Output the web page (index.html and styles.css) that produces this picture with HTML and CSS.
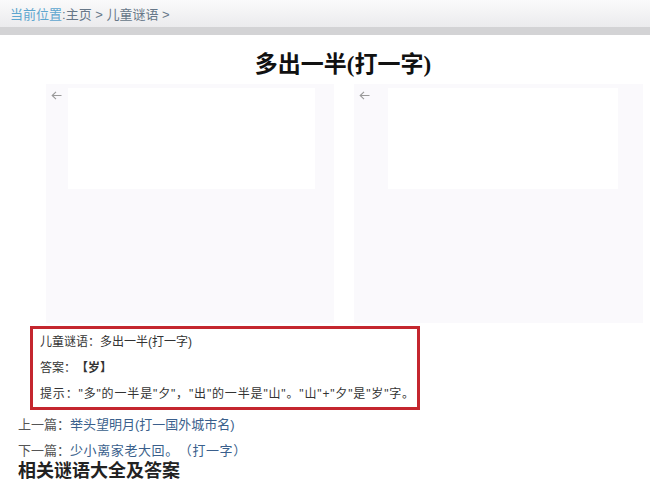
FILE: index.html
```html
<!DOCTYPE html>
<html lang="zh">
<head>
<meta charset="utf-8">
<title>多出一半(打一字)</title>
<link rel="stylesheet" href="styles.css">
</head>
<body>
<div class="topbar">
  <div class="crumb"><span class="crumb-lead">当前位置</span>:<a href="#">主页</a> &gt; <a href="#">儿童谜语</a> &gt;</div>
</div>
<div class="main">
  <h1 class="title">多出一半(打一字)</h1>
  <div class="panels">
    <div class="panel panel-left">
      <span class="arrow"><svg width="11" height="9" viewBox="0 0 11 9"><path d="M5 0.8 L1.2 4.5 L5 8.2 M1.2 4.5 H10.5" fill="none" stroke="#9a9a9a" stroke-width="1.1"/></svg></span>
      <div class="inner inner-left"></div>
    </div>
    <div class="panel panel-right">
      <span class="arrow"><svg width="11" height="9" viewBox="0 0 11 9"><path d="M5 0.8 L1.2 4.5 L5 8.2 M1.2 4.5 H10.5" fill="none" stroke="#9a9a9a" stroke-width="1.1"/></svg></span>
      <div class="inner inner-right"></div>
    </div>
  </div>
  <div class="answer">
    <p class="line">儿童谜语：多出一半(打一字)</p>
    <p class="line">答案：<b>【岁】</b></p>
    <p class="line line-hint">提示："多"的一半是"夕"，"出"的一半是"山"。"山"+"夕"是"岁"字。</p>
  </div>
  <div class="nav">
    <p class="nav-line">上一篇：<a href="#">举头望明月(打一国外城市名)</a></p>
    <p class="nav-line">下一篇：<a href="#" class="nav-wide">少小离家老大回。（打一字）</a></p>
  </div>
  <h2 class="related">相关谜语大全及答案</h2>
</div>
</body>
</html>
```
FILE: styles.css
```css
* { box-sizing: border-box; }
html, body { margin: 0; padding: 0; background: #fff; overflow: hidden; }
body {
  font-family: "Liberation Sans", "Noto Sans CJK SC", sans-serif;
  color: #333;
  text-spacing-trim: space-all;
}
a { text-decoration: none; color: inherit; }

.topbar {
  height: 35px;
  background: linear-gradient(#fafafb, #ebebed);
  border-bottom: 8px solid #d3d3d5;
}
.crumb {
  padding-left: 10px;
  padding-top: 2px;
  font-size: 13px;
  line-height: 25px;
  height: 27px;
  color: #667788;
}
.crumb-lead { color: #5ea6cf; }

.title {
  margin: 0;
  height: 49px;
  padding-top: 17px;
  padding-left: 36px;
  text-align: center;
  font-family: "Liberation Serif", "Noto Sans CJK SC", serif;
  font-size: 23px;
  line-height: 26px;
  font-weight: bold;
  color: #111;
}

.panels {
  display: flex;
  gap: 20px;
  margin-left: 46px;
  height: 239px;
}
.panel {
  display: flex;
  align-items: flex-start;
  background: #faf9fc;
  padding-top: 4px;
}
.panel-left { width: 288px; }
.panel-right { width: 289px; }
.arrow {
  display: block;
  margin-left: 5px;
  margin-top: 3px;
  width: 11px;
  height: 9px;
  line-height: 0;
}
.inner { background: #fff; height: 101px; }
.inner-left { margin-left: 6px; width: 247px; }
.inner-right { margin-left: 18px; width: 230px; }

.answer {
  margin: 3px 0 0 30px;
  width: 390px;
  border: 3px solid #c4262e;
  padding: 0 7px;
  font-size: 12px;
  color: #333;
}
.line { margin: 0; line-height: 26px; height: 26px; white-space: nowrap; }
.line b { font-weight: bold; }
.line-hint { letter-spacing: 0.85px; }

.nav { margin: 2px 0 0 18px; font-size: 13px; color: #555; }
.nav-line { margin: 0; line-height: 26px; height: 26px; }
.nav-line a { color: #3a5f8c; }
.nav-wide { letter-spacing: 0.6px; }

.related {
  margin: -2px 0 0 18px;
  font-size: 18px;
  line-height: 19px;
  font-weight: bold;
  color: #222;
}
```
